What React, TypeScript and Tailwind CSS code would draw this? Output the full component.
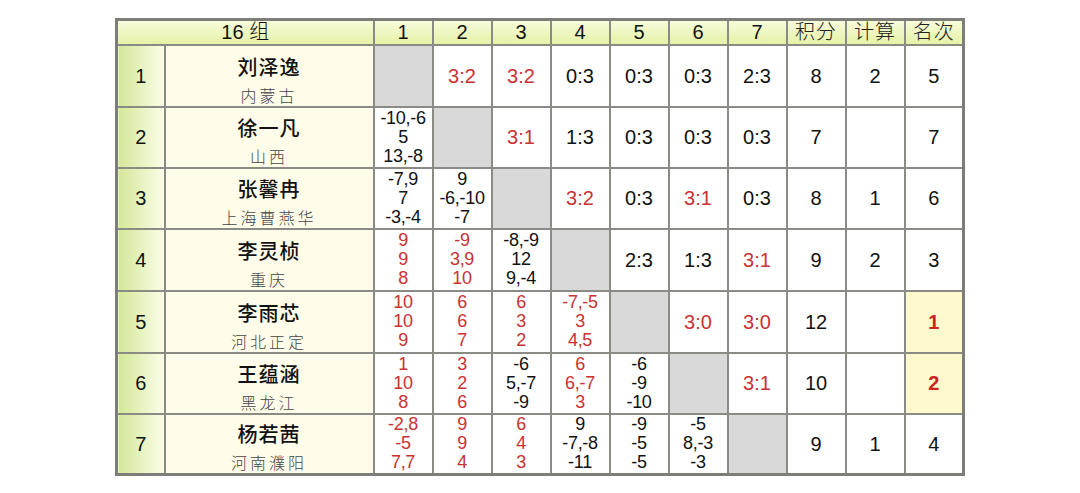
import React from "react";

type Cell =
  | { kind: "gray" }
  | { kind: "score"; text: string; red?: boolean }
  | { kind: "detail"; lines: string[]; red?: boolean };

type Player = {
  name: string;
  from: string;
  cells: Cell[];
  points: string;
  calc: string;
  rank: string;
  top?: boolean;
  tall?: boolean;
};

const g: Cell = { kind: "gray" };
const s = (text: string, red = false): Cell => ({ kind: "score", text, red });
const d = (text: string, red = false): Cell => ({ kind: "detail", lines: text.split("/"), red });

const players: Player[] = [
  {
    name: "刘泽逸",
    from: "内蒙古",
    cells: [g, s("3:2", true), s("3:2", true), s("0:3"), s("0:3"), s("0:3"), s("2:3")],
    points: "8",
    calc: "2",
    rank: "5",
    tall: true,
  },
  {
    name: "徐一凡",
    from: "山西",
    cells: [d("-10,-6/5/13,-8"), g, s("3:1", true), s("1:3"), s("0:3"), s("0:3"), s("0:3")],
    points: "7",
    calc: "",
    rank: "7",
  },
  {
    name: "张馨冉",
    from: "上海曹燕华",
    cells: [d("-7,9/7/-3,-4"), d("9/-6,-10/-7"), g, s("3:2", true), s("0:3"), s("3:1", true), s("0:3")],
    points: "8",
    calc: "1",
    rank: "6",
  },
  {
    name: "李灵桢",
    from: "重庆",
    cells: [d("9/9/8", true), d("-9/3,9/10", true), d("-8,-9/12/9,-4"), g, s("2:3"), s("1:3"), s("3:1", true)],
    points: "9",
    calc: "2",
    rank: "3",
    tall: true,
  },
  {
    name: "李雨芯",
    from: "河北正定",
    cells: [d("10/10/9", true), d("6/6/7", true), d("6/3/2", true), d("-7,-5/3/4,5", true), g, s("3:0", true), s("3:0", true)],
    points: "12",
    calc: "",
    rank: "1",
    top: true,
    tall: true,
  },
  {
    name: "王蕴涵",
    from: "黑龙江",
    cells: [d("1/10/8", true), d("3/2/6", true), d("-6/5,-7/-9"), d("6/6,-7/3", true), d("-6/-9/-10"), g, s("3:1", true)],
    points: "10",
    calc: "",
    rank: "2",
    top: true,
  },
  {
    name: "杨若茜",
    from: "河南濮阳",
    cells: [d("-2,8/-5/7,7", true), d("9/9/4", true), d("6/4/3", true), d("9/-7,-8/-11"), d("-9/-5/-5"), d("-5/8,-3/-3"), g],
    points: "9",
    calc: "1",
    rank: "4",
  },
];

const border = "border-2 border-[#8b8b85]";

function ScoreCell({ cell }: { cell: Cell }) {
  if (cell.kind === "gray") {
    return <td className={`${border} bg-[#d9d9d9]`} />;
  }
  if (cell.kind === "score") {
    return (
      <td className={`${border} bg-white text-center text-[20px] ${cell.red ? "text-[#c93232]" : "text-[#111]"}`}>
        {cell.text}
      </td>
    );
  }
  return (
    <td className={`${border} bg-white p-0 text-center align-middle`}>
      <div className={`flex flex-col items-center text-[18px] leading-[19px] tracking-[-0.3px] ${cell.red ? "text-[#c93232]" : "text-[#111]"}`}>
        {cell.lines.map((l, i) => (
          <span key={i}>{l}</span>
        ))}
      </div>
    </td>
  );
}

export default function App() {
  const heads = ["1", "2", "3", "4", "5", "6", "7"];
  return (
    <div className="min-h-screen bg-white pt-[18px] font-['Liberation_Sans','Noto_Sans_CJK_SC',sans-serif]">
      <table className="mx-auto w-[848px] table-fixed border-collapse border-[3px] border-[#7d7d7a]">
        <colgroup>
          <col className="w-[48px]" />
          <col className="w-[209px]" />
          {Array.from({ length: 10 }).map((_, i) => (
            <col key={i} className="w-[59px]" />
          ))}
        </colgroup>
        <thead>
          <tr className="h-[25px] bg-linear-to-b from-[#f8fcdc] to-[#e5f1a4] text-[20px] leading-none text-[#111]">
            <th colSpan={2} className={`${border} font-normal`}>
              16 <span className="font-light">组</span>
            </th>
            {heads.map((h) => (
              <th key={h} className={`${border} font-normal`}>
                {h}
              </th>
            ))}
            {["积分", "计算", "名次"].map((h) => (
              <th key={h} className={`${border} font-light tracking-[1px] text-[#222]`}>
                {h}
              </th>
            ))}
          </tr>
        </thead>
        <tbody>
          {players.map((p, idx) => (
            <tr key={p.name} className={p.tall ? "h-[62px]" : "h-[61px]"}>
              <td className={`${border} bg-linear-to-r from-[#d3e797] to-[#fbfde8] text-center text-[20px] text-[#111]`}>
                {idx + 1}
              </td>
              <td className={`${border} bg-[#fffde9] p-0 align-bottom`}>
                <div className="flex flex-col items-center">
                  <span className="text-[20px] font-medium leading-[26px] tracking-[1px] text-[#111]">{p.name}</span>
                  <span className="mt-[5px] -mb-[2px] text-[16px] font-light leading-[22px] tracking-[3px] text-[#444]">
                    {p.from}
                  </span>
                </div>
              </td>
              {p.cells.map((c, i) => (
                <ScoreCell key={i} cell={c} />
              ))}
              <td className={`${border} bg-white text-center text-[20px] text-[#111]`}>{p.points}</td>
              <td className={`${border} bg-white text-center text-[20px] text-[#111]`}>{p.calc}</td>
              <td
                className={`${border} text-center text-[20px] ${
                  p.top ? "bg-[#fdf9cc] font-bold text-[#cc2222]" : "bg-white text-[#111]"
                }`}
              >
                {p.rank}
              </td>
            </tr>
          ))}
        </tbody>
      </table>
    </div>
  );
}
